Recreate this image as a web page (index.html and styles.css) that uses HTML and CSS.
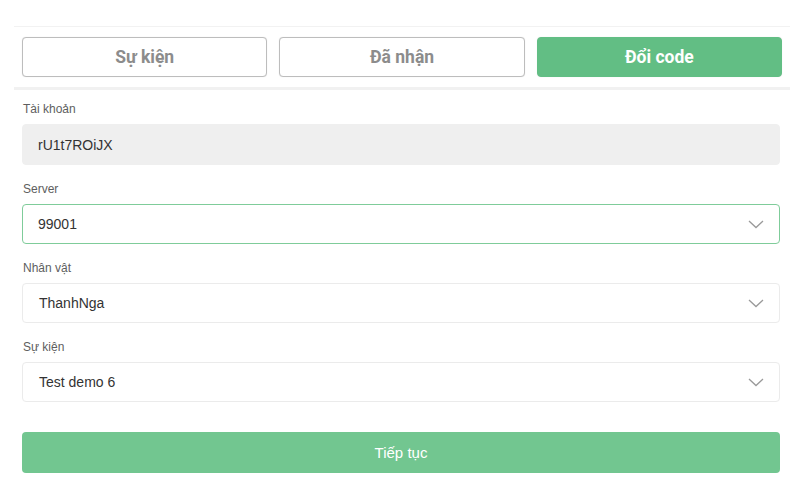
FILE: index.html
```html
<!DOCTYPE html>
<html lang="vi">
<head>
<meta charset="utf-8">
<title>Đổi code</title>
<link rel="stylesheet" href="styles.css">
</head>
<body>
<div class="tabs-wrap">
  <div class="tabs">
    <button class="tab">Sự kiện</button>
    <button class="tab">Đã nhận</button>
    <button class="tab active">Đổi code</button>
  </div>
</div>
<form class="form">
  <div class="group">
    <div class="label">Tài khoản</div>
    <div class="control readonly">rU1t7ROiJX</div>
  </div>
  <div class="group">
    <div class="label">Server</div>
    <div class="control select focus"><span>99001</span>
      <svg class="chev" viewBox="0 0 16 9" width="16" height="9"><path d="M1 1l7 6.5L15 1" fill="none" stroke="#9a9a9a" stroke-width="1.3"/></svg>
    </div>
  </div>
  <div class="group">
    <div class="label">Nhân vật</div>
    <div class="control select"><span>ThanhNga</span>
      <svg class="chev" viewBox="0 0 16 9" width="16" height="9"><path d="M1 1l7 6.5L15 1" fill="none" stroke="#9a9a9a" stroke-width="1.3"/></svg>
    </div>
  </div>
  <div class="group">
    <div class="label">Sự kiện</div>
    <div class="control select"><span>Test demo 6</span>
      <svg class="chev" viewBox="0 0 16 9" width="16" height="9"><path d="M1 1l7 6.5L15 1" fill="none" stroke="#9a9a9a" stroke-width="1.3"/></svg>
    </div>
  </div>
  <button type="button" class="submit">Tiếp tục</button>
</form>
</body>
</html>
```
FILE: styles.css
```css
html, body {
  margin: 0;
  padding: 0;
  background: #ffffff;
  font-family: "Liberation Sans", Arial, sans-serif;
}

.tabs-wrap {
  margin: 26px 10px 0 14px;
  border-top: 1px solid #f2f2f2;
  border-bottom: 3px solid #f1f1f1;
  padding: 10px 8px 10px 8px;
}

.tabs {
  display: grid;
  grid-template-columns: 1fr 1fr 1fr;
  column-gap: 12px;
}

.tab {
  height: 40px;
  box-sizing: border-box;
  border: 1px solid #bdbdbd;
  border-radius: 4px;
  background: #ffffff;
  color: #8c8c8c;
  font-family: Roboto, "Liberation Sans", sans-serif;
  font-weight: 700;
  font-size: 17.5px;
  box-shadow: 0 0 1px rgba(0,0,0,0.15);
}

.tab.active {
  background: #62be84;
  border-color: #62be84;
  color: #ffffff;
}

.form {
  margin: 0 20px 0 22px;
  padding-top: 11px;
}

.group {
  margin-bottom: 16px;
}

.label {
  height: 17px;
  line-height: 17px;
  font-size: 12px;
  color: #5e5e5e;
  margin-bottom: 6px;
  padding-left: 1px;
}

.control {
  box-sizing: border-box;
  height: 40px;
  border-radius: 4px;
  border: 1px solid #ebebeb;
  display: flex;
  align-items: center;
  padding: 0 15px 0 15px;
  font-size: 14px;
  color: #333333;
}

.control.readonly {
  height: 41px;
  background: #efefef;
  border-color: #efefef;
}

.control.select {
  justify-content: space-between;
  padding-left: 16px;
}

.control.focus {
  border-color: #7fcc9a;
  padding-left: 15px;
}

.chev {
  display: block;
  margin-right: 0;
}

.submit {
  display: block;
  width: 100%;
  height: 41px;
  margin-top: 30px;
  border: none;
  border-radius: 4px;
  background: #72c690;
  color: #ffffff;
  font-family: "Liberation Sans", Arial, sans-serif;
  font-size: 15px;
}
```
